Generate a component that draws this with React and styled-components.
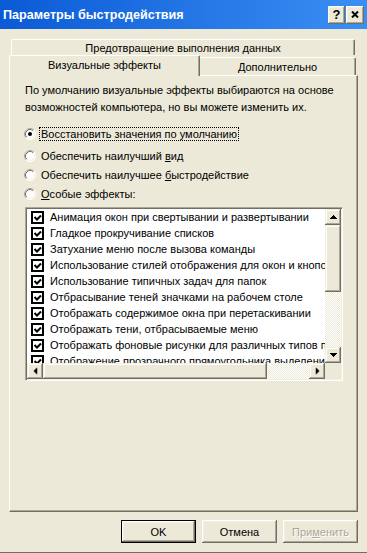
import React from 'react'
import styled, { createGlobalStyle } from 'styled-components'

const GlobalStyle = createGlobalStyle`
  html, body {
    margin: 0;
    padding: 0;
    background: #ece9d8;
  }
  body {
    font-family: "Liberation Sans", Arial, sans-serif;
    font-size: 11px;
    color: #000;
  }
`

const effects = [
  'Анимация окон при свертывании и развертывании',
  'Гладкое прокручивание списков',
  'Затухание меню после вызова команды',
  'Использование стилей отображения для окон и кнопок',
  'Использование типичных задач для папок',
  'Отбрасывание теней значками на рабочем столе',
  'Отображать содержимое окна при перетаскивании',
  'Отображать тени, отбрасываемые меню',
  'Отображать фоновые рисунки для различных типов папок',
  'Отображение прозрачного прямоугольника выделения',
]

function Arrow({ dir }) {
  return (
    <ArrowSvg width="7" height="4" viewBox="0 0 7 4" dir={dir}>
      <path d="M3 0h1v1h1v1h1v1h1v1H0V3h1V2h1V1h1z" fill="#000" />
    </ArrowSvg>
  )
}

function Radio({ checked }) {
  return (
    <RadioSvg width="12" height="12" viewBox="0 0 12 12">
      <circle cx="6" cy="6" r="5.5" fill="#fff" />
      <path d="M2.11 9.89A5.5 5.5 0 0 1 9.89 2.11" stroke="#aca899" fill="none" />
      <path d="M9.89 2.11A5.5 5.5 0 0 1 2.11 9.89" stroke="#fff" fill="none" />
      <path d="M2.82 9.18A4.5 4.5 0 0 1 9.18 2.82" stroke="#716f64" fill="none" />
      <path d="M9.18 2.82A4.5 4.5 0 0 1 2.82 9.18" stroke="#f1efe2" fill="none" />
      {checked && <circle cx="6" cy="6" r="2" fill="#000" />}
    </RadioSvg>
  )
}

function Check() {
  return (
    <CheckSvg width="13" height="13" viewBox="0 0 13 13">
      <rect x="1" y="1" width="11" height="11" fill="#fff" stroke="#000" strokeWidth="2" />
      <path d="M3.5 6l2.5 2.5 4-4" stroke="#000" strokeWidth="2" fill="none" />
    </CheckSvg>
  )
}

function App() {
  return (
    <>
      <GlobalStyle />
      <Window>
        <TitleBar>
          <Title>Параметры быстродействия</Title>
          <CaptionButton w={17}>?</CaptionButton>
          <CaptionButton w={18}>
            <svg width="8" height="7" viewBox="0 0 8 7">
              <path d="M1 0.5l6 6M7 0.5l-6 6" stroke="#000" strokeWidth="2" />
            </svg>
          </CaptionButton>
        </TitleBar>

        <Body>
          <BackRow>
            <BackTab>Предотвращение выполнения данных</BackTab>
          </BackRow>
          <FrontRow>
            <Tab active>Визуальные эффекты</Tab>
            <Tab>Дополнительно</Tab>
          </FrontRow>

          <Panel>
            <Description>
              По умолчанию визуальные эффекты выбираются на основе
              <br />
              возможностей компьютера, но вы можете изменить их.
            </Description>

            <RadioGroup>
              <RadioRow spaced>
                <Radio checked />
                <Focus>Восстановить значения по умолчанию</Focus>
              </RadioRow>
              <RadioRow>
                <Radio />
                <span>Обеспечить наилучший <u>в</u>ид</span>
              </RadioRow>
              <RadioRow>
                <Radio />
                <span>Обеспечить наилучшее <u>б</u>ыстродействие</span>
              </RadioRow>
              <RadioRow>
                <Radio />
                <span><u>О</u>собые эффекты:</span>
              </RadioRow>
            </RadioGroup>

            <ListBox>
              <Items>
                {effects.map(e => (
                  <Item key={e}>
                    <Check />
                    <span>{e}</span>
                  </Item>
                ))}
              </Items>

              <VScroll>
                <ScrollButton><Arrow dir="up" /></ScrollButton>
                <Thumb size={67} />
                <Track />
                <ScrollButton><Arrow dir="down" /></ScrollButton>
              </VScroll>

              <HScroll>
                <ScrollButton><Arrow dir="left" /></ScrollButton>
                <Thumb size={224} />
                <Track />
                <ScrollButton><Arrow dir="right" /></ScrollButton>
              </HScroll>

              <Corner />
            </ListBox>
          </Panel>

          <Buttons>
            <Button isDefault>OK</Button>
            <Button>Отмена</Button>
            <Button disabled>При<u>м</u>енить</Button>
          </Buttons>
        </Body>
      </Window>
    </>
  )
}

export default App

const raised = `
  background: #ece9d8;
  box-shadow: inset -1px -1px #716f64, inset 1px 1px #fff,
    inset -2px -2px #aca899, inset 2px 2px #f1efe2;
`

const Window = styled.div`
  width: 367px;
  height: 553px;
  box-sizing: border-box;
  display: flex;
  flex-direction: column;
  background: #ece9d8;
  border-bottom: 1px solid #716f64;
  overflow: hidden;
`

const TitleBar = styled.div`
  flex: none;
  height: 29px;
  display: flex;
  align-items: center;
  gap: 1px;
  padding: 0 3px 0 3px;
  background: linear-gradient(to right, #0b5ad6, #3a8ff3);
`

const Title = styled.div`
  flex: 1;
  font: bold 12.6px "Liberation Sans", Arial, sans-serif;
  color: #fff;
  white-space: nowrap;
`

const CaptionButton = styled.button`
  width: ${p => p.w}px;
  height: 18px;
  padding: 0;
  border: none;
  display: flex;
  align-items: center;
  justify-content: center;
  font: bold 13px "Liberation Sans", Arial, sans-serif;
  color: #000;
  ${raised}
`

const Body = styled.div`
  flex: 1;
  display: flex;
  flex-direction: column;
  padding: 10px 9px 0 9px;
`

const BackRow = styled.div`
  height: 16px;
  display: flex;
  padding: 0 3px 0 2px;
`

const BackTab = styled.div`
  flex: 1;
  box-sizing: border-box;
  border: 1px solid #fff;
  border-right-color: #716f64;
  border-bottom: none;
  border-radius: 2px 2px 0 0;
  box-shadow: inset -1px 0 #aca899;
  display: flex;
  align-items: center;
  justify-content: center;
  padding-top: 1px;
`

const FrontRow = styled.div`
  height: 20px;
  display: flex;
  align-items: flex-start;
  padding-right: 2px;
  position: relative;
  z-index: 1;
`

const Tab = styled.div`
  box-sizing: border-box;
  width: ${p => (p.active ? 191 : 156)}px;
  height: ${p => (p.active ? 21 : 18)}px;
  margin-top: ${p => (p.active ? 0 : 2)}px;
  background: #ece9d8;
  border: 1px solid #fff;
  border-right-color: #716f64;
  border-left-width: ${p => (p.active ? 1 : 0)}px;
  border-bottom: none;
  border-radius: 2px 2px 0 0;
  box-shadow: inset -1px 0 #aca899;
  display: flex;
  align-items: center;
  justify-content: center;
  padding-bottom: ${p => (p.active ? 2 : 0)}px;
`

const Panel = styled.div`
  flex: 1;
  box-sizing: border-box;
  border: 1px solid #fff;
  border-right-color: #716f64;
  border-bottom-color: #716f64;
  box-shadow: inset -1px -1px #aca899;
  padding: 6px 14px 0 15px;
  display: flex;
  flex-direction: column;
`

const Description = styled.div`
  line-height: 17px;
  white-space: nowrap;
`

const RadioGroup = styled.div`
  margin-top: 8px;
  display: flex;
  flex-direction: column;
`

const RadioRow = styled.label`
  height: 19px;
  display: flex;
  align-items: center;
  gap: 5px;
  margin-left: -1px;
  margin-bottom: ${p => (p.spaced ? 3 : 0)}px;
  white-space: nowrap;
`

const RadioSvg = styled.svg`
  flex: none;
`

const Focus = styled.span`
  outline: 1px dotted #000;
  outline-offset: 0;
  padding: 0 1px;
  margin-left: -1px;
`

const ListBox = styled.div`
  margin-top: 4px;
  width: 318px;
  height: 174px;
  box-sizing: border-box;
  border: 1px solid;
  border-color: #aca899 #fff #fff #aca899;
  box-shadow: inset 1px 1px #716f64, inset -1px -1px #f1efe2;
  padding: 1px;
  background: #fff;
  display: grid;
  grid-template-columns: 1fr 16px;
  grid-template-rows: 1fr 16px;
`

const Items = styled.div`
  overflow: hidden;
  min-width: 0;
  min-height: 0;
`

const Item = styled.div`
  height: 16px;
  display: flex;
  align-items: center;
  gap: 6px;
  padding-left: 4px;
  white-space: nowrap;
`

const CheckSvg = styled.svg`
  flex: none;
`

const VScroll = styled.div`
  display: flex;
  flex-direction: column;
`

const HScroll = styled.div`
  display: flex;
`

const ScrollButton = styled.div`
  flex: none;
  width: 16px;
  height: 16px;
  box-sizing: border-box;
  display: flex;
  align-items: center;
  justify-content: center;
  box-shadow: inset -1px -1px #716f64, inset 1px 1px #f1efe2,
    inset -2px -2px #aca899, inset 2px 2px #fff;
  background: #ece9d8;
`

const ArrowSvg = styled.svg`
  transform: rotate(${p => ({ up: 0, down: 180, left: -90, right: 90 }[p.dir])}deg);
`

const Thumb = styled.div`
  flex: 0 0 ${p => p.size}px;
  min-width: 16px;
  min-height: 16px;
  box-shadow: inset -1px -1px #716f64, inset 1px 1px #f1efe2,
    inset -2px -2px #aca899, inset 2px 2px #fff;
  background: #ece9d8;
`

const Track = styled.div`
  flex: 1;
  background: repeating-conic-gradient(#fff 0 25%, #ece9d8 0 50%) 0 0 / 2px 2px;
`

const Corner = styled.div`
  background: #ece9d8;
`

const Buttons = styled.div`
  display: flex;
  justify-content: flex-end;
  gap: 6px;
  margin: 8px 0 9px;
`

const Button = styled.button`
  width: 75px;
  height: 23px;
  padding: 0;
  border: ${p => (p.isDefault ? '1px solid #000' : 'none')};
  box-sizing: border-box;
  font-family: "Liberation Sans", Arial, sans-serif;
  font-size: 11px;
  color: ${p => (p.disabled ? '#aca899' : '#000')};
  text-shadow: ${p => (p.disabled ? '1px 1px #fff' : 'none')};
  ${raised}
`
